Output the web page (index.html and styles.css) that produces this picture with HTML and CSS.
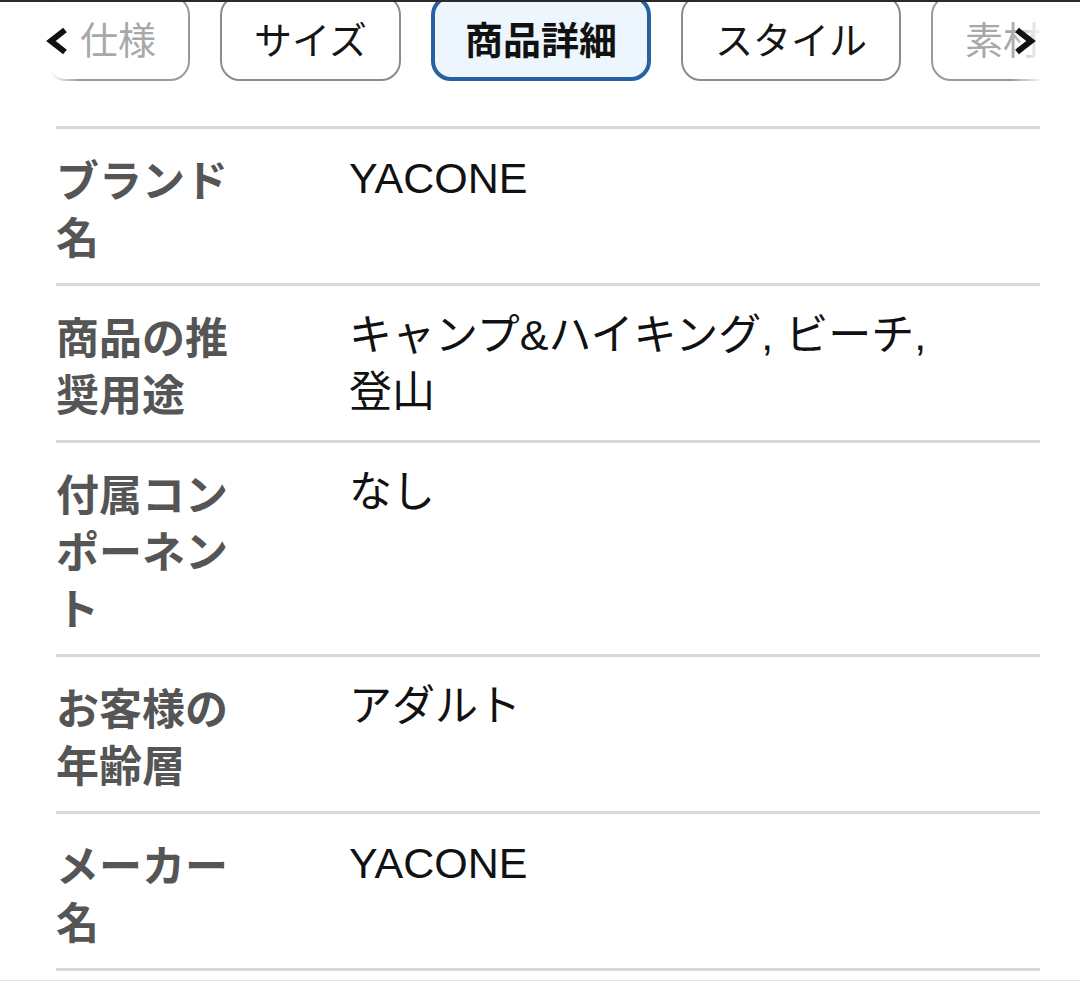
FILE: index.html
```html
<!DOCTYPE html>
<html lang="ja">
<head>
<meta charset="utf-8">
<title>商品詳細</title>
<link rel="stylesheet" href="styles.css">
</head>
<body>
<div class="topbar"></div>
<nav class="tabbar">
  <div class="tabs">
    <span class="tab tab-faded">仕様</span>
    <span class="tab">サイズ</span>
    <span class="tab tab-active">商品詳細</span>
    <span class="tab">スタイル</span>
    <span class="tab tab-faded">素材</span>
  </div>
  <div class="fade fade-left">
    <svg class="chev" width="26" height="30" viewBox="0 0 26 30"><polyline points="20,4 6,15 20,26" fill="none" stroke="#111" stroke-width="6"/></svg>
  </div>
  <div class="fade fade-right">
    <svg class="chev" width="26" height="30" viewBox="0 0 26 30"><polyline points="5,4 19,15 5,26" fill="none" stroke="#111" stroke-width="6"/></svg>
  </div>
</nav>
<section class="details">
  <div class="row">
    <div class="label">ブランド名</div>
    <div class="value">YACONE</div>
  </div>
  <div class="row">
    <div class="label">商品の推奨用途</div>
    <div class="value">キャンプ&amp;ハイキング, ビーチ, <span class="nowrap">登山</span></div>
  </div>
  <div class="row">
    <div class="label">付属コンポーネント</div>
    <div class="value">なし</div>
  </div>
  <div class="row">
    <div class="label">お客様の年齢層</div>
    <div class="value">アダルト</div>
  </div>
  <div class="row">
    <div class="label">メーカー名</div>
    <div class="value">YACONE</div>
  </div>
</section>
<div class="bottomline"></div>
</body>
</html>
```
FILE: styles.css
```css
html, body {
  margin: 0;
  padding: 0;
  background: #fff;
}
body {
  width: 1080px;
  height: 983px;
  overflow: hidden;
  font-family: "Liberation Sans", "Noto Sans CJK JP", sans-serif;
}
.topbar {
  height: 2px;
  background: #2a2a2a;
}
.tabbar {
  position: relative;
  height: 80px;
  overflow: hidden;
}
.tabs {
  display: flex;
  gap: 30px;
  margin-top: -7px;
  padding-left: 46px;
}
.tab {
  flex-shrink: 0;
  box-sizing: border-box;
  height: 86px;
  padding: 0 32px;
  border: 2px solid #8c8c8c;
  border-radius: 20px;
  display: flex;
  align-items: center;
  font-family: "Noto Sans CJK JP", sans-serif;
  font-size: 38px;
  line-height: 1;
  color: #151515;
}
.tab-faded {
  color: #a8a8a8;
  border-color: #9a9a9a;
}
.tab-active {
  border: 4px solid #2662a2;
  padding: 0 30px;
  background: #eef6fd;
  font-weight: 700;
  color: #111;
}
.fade {
  position: absolute;
  top: 0;
  height: 80px;
}
.fade-left {
  left: 0;
  width: 80px;
  background: linear-gradient(to right, #fff 0, #fff 50px, rgba(255,255,255,0) 80px);
}
.fade-right {
  right: 0;
  width: 70px;
  background: linear-gradient(to left, #fff 0, #fff 36px, rgba(255,255,255,0) 70px);
}
.chev {
  position: absolute;
  top: 24px;
}
.fade-left .chev {
  left: 45px;
}
.fade-right .chev {
  left: 2px;
}
.details {
  margin: 44px 40px 0 56px;
}
.row {
  display: grid;
  grid-template-columns: 293px 1fr;
  border-top: 3px solid #d8d8d8;
  padding: 21px 0 19px;
  line-height: 57px;
}
.row:last-child {
  border-bottom: 3px solid #d8d8d8;
}
.label {
  max-width: 200px;
  font-family: "Noto Sans CJK JP", sans-serif;
  font-weight: 700;
  font-size: 43px;
  color: #555;
}
.value {
  padding-right: 40px;
  font-size: 43px;
  color: #111;
}
.nowrap {
  white-space: nowrap;
}
.bottomline {
  margin-top: 9px;
  height: 1px;
  background: #e2e2e2;
}
```
